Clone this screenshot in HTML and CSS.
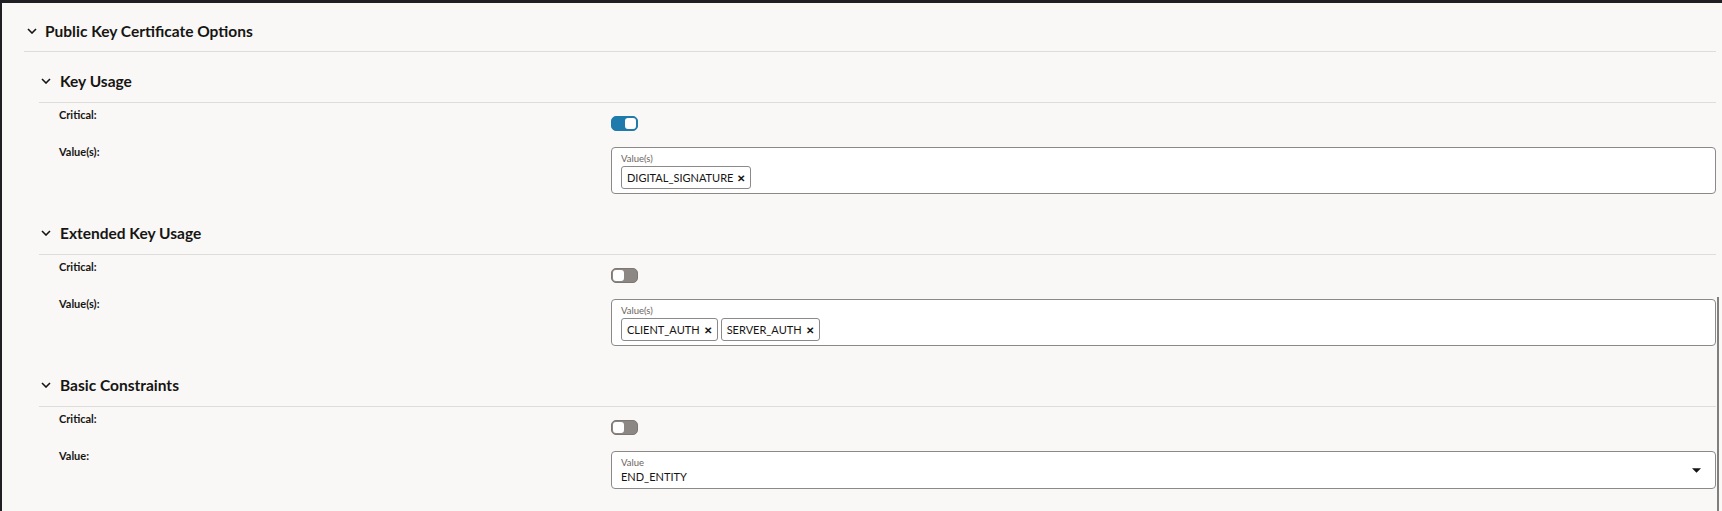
FILE: index.html
```html
<!DOCTYPE html>
<html>
<head>
<meta charset="utf-8">
<link rel="stylesheet" href="styles.css">
</head>
<body>
<div class="page">
  <div class="panel-header">
    <svg class="chev" viewBox="0 0 10 6" width="10" height="6"><path d="M1 1 L5 5 L9 1" fill="none" stroke="#161513" stroke-width="1.6"/></svg>
    <span>Public Key Certificate Options</span>
  </div>

  <section class="sub">
    <div class="sub-header">
      <svg class="chev" viewBox="0 0 10 6" width="10" height="6"><path d="M1 1 L5 5 L9 1" fill="none" stroke="#161513" stroke-width="1.6"/></svg>
      <span>Key Usage</span>
    </div>
    <div class="rows">
      <div class="label crit">Critical:</div>
      <div class="field crit-f"><span class="toggle on"><span class="knob"></span></span></div>
      <div class="label val">Value(s):</div>
      <div class="field">
        <div class="box">
          <div class="box-label">Value(s)</div>
          <div class="chips"><span class="chip">DIGITAL_SIGNATURE <span class="x">✕</span></span></div>
        </div>
      </div>
    </div>
  </section>

  <section class="sub">
    <div class="sub-header">
      <svg class="chev" viewBox="0 0 10 6" width="10" height="6"><path d="M1 1 L5 5 L9 1" fill="none" stroke="#161513" stroke-width="1.6"/></svg>
      <span>Extended Key Usage</span>
    </div>
    <div class="rows">
      <div class="label crit">Critical:</div>
      <div class="field crit-f"><span class="toggle"><span class="knob"></span></span></div>
      <div class="label val">Value(s):</div>
      <div class="field">
        <div class="box">
          <div class="box-label">Value(s)</div>
          <div class="chips"><span class="chip">CLIENT_AUTH <span class="x">✕</span></span><span class="chip">SERVER_AUTH <span class="x">✕</span></span></div>
        </div>
      </div>
    </div>
  </section>

  <section class="sub">
    <div class="sub-header">
      <svg class="chev" viewBox="0 0 10 6" width="10" height="6"><path d="M1 1 L5 5 L9 1" fill="none" stroke="#161513" stroke-width="1.6"/></svg>
      <span>Basic Constraints</span>
    </div>
    <div class="rows">
      <div class="label crit">Critical:</div>
      <div class="field crit-f"><span class="toggle"><span class="knob"></span></span></div>
      <div class="label val">Value:</div>
      <div class="field">
        <div class="box select">
          <div class="box-label">Value</div>
          <div class="sel-value">END_ENTITY</div>
          <svg class="caret" viewBox="0 0 8 4" width="9" height="5"><path d="M0 0 L8 0 L4 4 Z" fill="#161513"/></svg>
        </div>
      </div>
    </div>
  </section>
</div>
<div class="scrollbar"></div>
</body>
</html>
```

FILE: styles.css
```css
html, body {
  margin: 0;
  padding: 0;
}
body {
  background: #f9f8f6;
  border-top: 3px solid #202024;
  border-left: 2px solid #202024;
  height: 508px;
  box-sizing: content-box;
  font-family: Lato, "Noto Sans", sans-serif;
  color: #161513;
  overflow: hidden;
  position: relative;
}
.page {
  padding-left: 22px;
  padding-right: 6px;
}
.panel-header {
  display: flex;
  align-items: center;
  height: 49px;
  box-sizing: border-box;
  padding-top: 8px;
  border-bottom: 1px solid #dfddd9;
  font-size: 15.5px;
  font-weight: 700;
}
.panel-header .chev {
  margin-left: 3px;
  margin-right: 8px;
}
.sub {
  margin-left: 15px;
  padding-bottom: 10px;
}
.sub-header {
  display: flex;
  align-items: center;
  height: 51px;
  box-sizing: border-box;
  padding-top: 8px;
  border-bottom: 1px solid #dfddd9;
  font-size: 15.5px;
  font-weight: 700;
}
.sub-header .chev {
  margin-left: 2px;
  margin-right: 9px;
}
.rows {
  display: grid;
  grid-template-columns: 552px 1fr;
  padding-left: 20px;
  align-items: start;
}
.label {
  font-size: 11px;
  font-weight: 700;
  line-height: 14px;
}
.label.crit {
  margin-top: 5px;
}
.field.crit-f {
  margin-top: 13px;
  height: 15px;
  margin-bottom: 16px;
}
.label.val {
  margin-top: -2px;
}
.toggle {
  display: block;
  width: 27px;
  height: 15px;
  box-sizing: border-box;
  border-radius: 5px;
  background: #8c8782;
  border: 1px solid #7c7772;
  position: relative;
}
.toggle .knob {
  position: absolute;
  left: 1px;
  top: 1px;
  width: 11px;
  height: 11px;
  border-radius: 3px;
  background: #ffffff;
}
.toggle.on {
  background: #1f7bab;
  border-color: #1f7bab;
}
.toggle.on .knob {
  left: auto;
  right: 1px;
}
.box {
  background: #ffffff;
  border: 1px solid #8b8a88;
  border-radius: 4px;
  padding: 4px 9px 4px 9px;
  position: relative;
}
.box-label {
  font-size: 9.5px;
  line-height: 14px;
  color: #6b6560;
}
.chips {
  display: flex;
  gap: 3px;
}
.chip {
  display: inline-flex;
  align-items: center;
  height: 23px;
  box-sizing: border-box;
  border: 1px solid #8b8a88;
  border-radius: 3px;
  padding: 0 5px 0 5px;
  font-size: 11px;
  background: #ffffff;
}
.chip .x {
  font-size: 10px;
  margin-left: 4px;
  font-weight: 700;
}
.select {
  padding-bottom: 5px;
}
.sel-value {
  font-size: 11px;
  line-height: 13px;
}
.caret {
  position: absolute;
  right: 14px;
  top: 16px;
}
.scrollbar {
  position: absolute;
  right: 3px;
  top: 294px;
  width: 2px;
  height: 220px;
  background: #7f7f7f;
}
```
